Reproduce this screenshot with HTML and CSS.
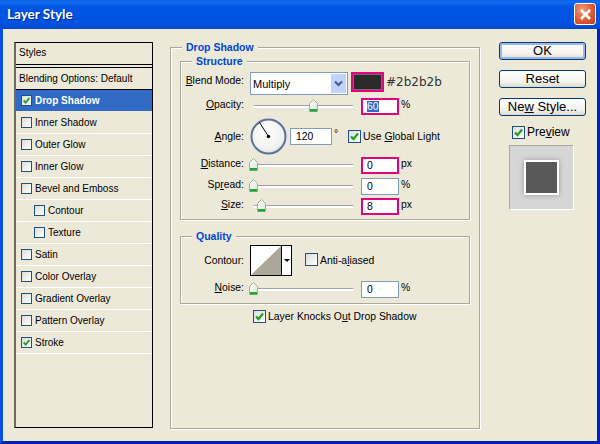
FILE: index.html
```html
<!DOCTYPE html>
<html lang="en">

<head>
  <meta charset="UTF-8">
  <meta name="viewport" content="width=device-width, initial-scale=1.0">
  <title>Layer Style</title>
  <link rel="stylesheet" href="styles.css">
</head>

<body>
  <svg class="defs" width="0" height="0">
    <defs>
      <linearGradient id="thumbFill" x1="0" y1="0" x2="1" y2="1">
        <stop offset="0" stop-color="#ffffff" />
        <stop offset="1" stop-color="#dfe6d8" />
      </linearGradient>
      <symbol id="thumb" viewBox="0 0 9 13">
        <path d="M4.5 .5 8.5 4.5V12.5H.5V4.5Z" fill="url(#thumbFill)" stroke="#8fb79a" />
        <path d="M1 10h7v2.500H1Z" fill="#27a33c" />
      </symbol>
      <symbol id="tick" viewBox="0 0 11 11">
        <path d="M2 5.500 4.500 8 9 2.500" fill="none" stroke="#21a121" stroke-width="2.200" />
      </symbol>
    </defs>
  </svg>

  <div class="window">
    <div class="titlebar">
      <div class="title">Layer Style</div>
      <div class="close">
        <svg width="13" height="13" viewBox="0 0 13 13">
          <path d="M2 2 11 11M11 2 2 11" stroke="#fff" stroke-width="2.600" />
        </svg>
      </div>
    </div>

    <div class="client">
      <div class="styles-list">
        <div class="list-head">Styles</div>
        <div class="list-blend">Blending Options: Default</div>
        <div class="list-row selected"><span class="check"><svg><use href="#tick" /></svg></span>Drop Shadow</div>
        <div class="list-row"><span class="check"></span>Inner Shadow</div>
        <div class="list-row"><span class="check"></span>Outer Glow</div>
        <div class="list-row"><span class="check"></span>Inner Glow</div>
        <div class="list-row"><span class="check"></span>Bevel and Emboss</div>
        <div class="list-row sub"><span class="check"></span>Contour</div>
        <div class="list-row sub"><span class="check"></span>Texture</div>
        <div class="list-row"><span class="check"></span>Satin</div>
        <div class="list-row"><span class="check"></span>Color Overlay</div>
        <div class="list-row"><span class="check"></span>Gradient Overlay</div>
        <div class="list-row"><span class="check"></span>Pattern Overlay</div>
        <div class="list-row"><span class="check"><svg><use href="#tick" /></svg></span>Stroke</div>
      </div>

      <fieldset class="group outer">
        <legend>Drop Shadow</legend>

        <fieldset class="group structure">
          <legend>Structure</legend>

          <div class="row blend-row">
            <label class="lbl"><u>B</u>lend Mode:</label>
            <div class="select">
              <span class="select-val">Multiply</span>
              <span class="select-btn">
                <svg width="9" height="7" viewBox="0 0 9 7">
                  <path d="M1 1.500 4.500 5 8 1.500" fill="none" stroke="#3d5a8f" stroke-width="2" />
                </svg>
              </span>
            </div>
            <div class="swatch"></div>
            <div class="hex">#2b2b2b</div>
          </div>

          <div class="row opacity-row">
            <label class="lbl"><u>O</u>pacity:</label>
            <div class="slider"><svg class="thumb" style="left:56px"><use href="#thumb" /></svg></div>
            <div class="num pink"><span class="sel">60</span></div>
            <span class="unit">%</span>
          </div>

          <div class="row angle-row">
            <label class="lbl"><u>A</u>ngle:</label>
            <svg class="dial" width="37" height="37" viewBox="0 0 37 37">
              <defs>
                <radialGradient id="dialFill" cx=".45" cy=".4" r=".65">
                  <stop offset="0" stop-color="#ffffff" />
                  <stop offset=".75" stop-color="#f1f1ee" />
                  <stop offset="1" stop-color="#d4d6dc" />
                </radialGradient>
              </defs>
              <circle cx="18.500" cy="18.500" r="17" fill="url(#dialFill)" stroke="#5d7099" stroke-width="2" />
              <path d="M18.500 18.500 9.500 4.500" stroke="#000" stroke-width="1" />
              <circle cx="18.500" cy="18.500" r="1.700" fill="#000" />
            </svg>
            <div class="num angle-num">120</div>
            <span class="deg">°</span>
            <span class="check lg"><svg><use href="#tick" /></svg></span>
            <span class="check-text">Use <u>G</u>lobal Light</span>
          </div>

          <div class="row dist-row">
            <label class="lbl"><u>D</u>istance:</label>
            <div class="slider"><svg class="thumb" style="left:-4px"><use href="#thumb" /></svg></div>
            <div class="num pink">0</div>
            <span class="unit">px</span>
          </div>

          <div class="row spread-row">
            <label class="lbl">Sp<u>r</u>ead:</label>
            <div class="slider"><svg class="thumb" style="left:-4px"><use href="#thumb" /></svg></div>
            <div class="num">0</div>
            <span class="unit">%</span>
          </div>

          <div class="row size-row">
            <label class="lbl"><u>S</u>ize:</label>
            <div class="slider"><svg class="thumb" style="left:4px"><use href="#thumb" /></svg></div>
            <div class="num pink">8</div>
            <span class="unit">px</span>
          </div>
        </fieldset>

        <fieldset class="group quality">
          <legend>Quality</legend>

          <div class="row contour-row">
            <label class="lbl">Contour:</label>
            <div class="contour">
              <svg width="30" height="29" viewBox="0 0 30 29">
                <path d="M0 0H30V29H0Z" fill="#fff" />
                <path d="M30 0V29H0Z" fill="#aca899" />
              </svg>
              <span class="contour-btn"></span>
            </div>
            <span class="check lg"></span>
            <span class="check-text">Anti-a<u>l</u>iased</span>
          </div>

          <div class="row noise-row">
            <label class="lbl"><u>N</u>oise:</label>
            <div class="slider"><svg class="thumb" style="left:-4px"><use href="#thumb" /></svg></div>
            <div class="num">0</div>
            <span class="unit">%</span>
          </div>
        </fieldset>

        <div class="knock-row">
          <span class="check lg"><svg><use href="#tick" /></svg></span>
          <span class="check-text">Layer Knocks O<u>u</u>t Drop Shadow</span>
        </div>
      </fieldset>

      <div class="side">
        <div class="btn default">OK</div>
        <div class="btn">Reset</div>
        <div class="btn">Ne<u>w</u> Style...</div>
        <div class="preview-row">
          <span class="check lg"><svg><use href="#tick" /></svg></span>
          <span class="check-text">Pre<u>v</u>iew</span>
        </div>
        <div class="preview">
          <div class="preview-square"></div>
        </div>
      </div>
    </div>
  </div>
</body>

</html>
```

FILE: styles.css
```css
* {
  box-sizing: border-box;
}

body {
  margin: 0;
  font-family: "Liberation Sans", sans-serif;
  font-size: 10.400px;
  color: #000;
}

.defs {
  display: block;
  height: 0;
}

.window {
  display: flex;
  flex-direction: column;
  width: 600px;
  height: 444px;
  overflow: hidden;
}

/* title bar */
.titlebar {
  display: flex;
  align-items: center;
  justify-content: space-between;
  height: 29px;
  padding: 0 4px 1px 7px;
  background: linear-gradient(#0a5fe6 0, #0f6cf0 8%, #0055e5 25%, #0053e1 80%, #0048c8 100%);
}

.title {
  font-family: Lato, sans-serif;
  font-weight: bold;
  font-size: 13.500px;
  color: #fff;
  text-shadow: 1px 1px 1px #0a2a8c;
}

.close {
  display: flex;
  align-items: center;
  justify-content: center;
  width: 22px;
  height: 22px;
  border: 1px solid #fff;
  border-radius: 3px;
  background: radial-gradient(circle at 35% 30%, #ee9c7f, #dd5a33 55%, #c23a18);
}

/* client area */
.client {
  flex: 1;
  display: flex;
  align-items: flex-start;
  padding: 12px 0 0 11px;
  background: #ece9d8;
  border-left: 3px solid #0a4fe0;
  border-right: 3px solid #0021c4;
  border-bottom: 3px solid #0021b8;
}

/* left list */
.styles-list {
  flex: none;
  width: 139px;
  height: 386px;
  margin-top: 1px;
  font-size: 10px;
  border: 1px solid #000;
  border-left: 2px solid #6d6b60;
}

.list-head {
  height: 22px;
  padding-left: 3px;
  line-height: 20px;
  border-bottom: 1px solid #000;
}

.list-blend {
  height: 23px;
  margin-top: 2px;
  padding-left: 3px;
  line-height: 21px;
  border-top: 1px solid #000;
  border-bottom: 1px solid #000;
}

.list-row {
  display: flex;
  align-items: center;
  gap: 3px;
  height: 22px;
  padding: 0 0 1px 5px;
  border-bottom: 1px solid #fff;
}

.list-row.sub {
  padding-left: 18px;
}

.list-row.selected {
  background: #316ac5;
  color: #fff;
  font-weight: bold;
  border-bottom-color: #ece9d8;
}

/* checkbox */
.check {
  flex: none;
  display: block;
  width: 11px;
  height: 11px;
  border: 1px solid #1c5180;
  background: linear-gradient(135deg, #dcdcd7, #fff);
}

.check svg {
  display: block;
  width: 100%;
  height: 100%;
}

.check.lg {
  width: 13px;
  height: 13px;
  border-width: 1.500px;
}

.check-text {
  margin-left: 2px;
}

/* group boxes */
.group {
  margin: 0;
  padding: 0;
  border: 1px solid #aca899;
  box-shadow: inset 1px 1px 0 #fff, 1px 1px 0 #fff;
}

.group legend {
  padding: 0 4px;
  margin-left: 11px;
  height: 13px;
  line-height: 13px;
  font-weight: bold;
  font-size: 10.500px;
  color: #0046d5;
  background: #ece9d8;
}

.outer {
  flex: none;
  width: 310px;
  height: 388px;
  margin-left: 17px;
  padding: 1px 9px 0;
}

.outer > legend {
  margin-left: 2px;
}

.structure {
  height: 165px;
}

.quality {
  height: 74px;
  margin-top: 10px;
}

/* control rows */
.row {
  display: flex;
  align-items: center;
}

.lbl {
  flex: none;
  width: 63px;
  margin-right: 6px;
  margin-bottom: 3px;
  text-align: right;
}

.blend-row {
  height: 24px;
  margin-top: 3px;
}

.blend-row .lbl {
  margin-bottom: 6px;
}

.opacity-row {
  height: 18px;
  margin-top: 2px;
}

.angle-row {
  height: 37px;
  margin-top: 3px;
}

.angle-row .lbl {
  margin-bottom: 0;
}

.dist-row {
  height: 18px;
  margin-top: 1px;
}

.spread-row {
  height: 18px;
  margin-top: 3px;
}

.size-row {
  height: 18px;
  margin-top: 2px;
}

.select {
  flex: none;
  display: flex;
  width: 98px;
  height: 23px;
  border: 1px solid #7f9db9;
  background: #fff;
}

.select-val {
  flex: 1;
  padding-left: 2px;
  font-size: 11px;
  line-height: 22px;
}

.select-btn {
  display: flex;
  align-items: center;
  justify-content: center;
  width: 15px;
  margin: 1px;
  background: #c1d3fb;
}

.swatch {
  flex: none;
  width: 33px;
  height: 20px;
  margin: 0 0 2px 3px;
  border: 1px solid #e6007e;
  background: #2b2b2b;
  box-shadow: inset 0 0 0 1px #e6007e, inset 0 0 0 2px #6f6f6f;
}

.hex {
  margin: 0 0 2px 2px;
  font-family: "DejaVu Sans", sans-serif;
  font-size: 12px;
  color: #333;
}

.slider {
  flex: none;
  position: relative;
  width: 101px;
  height: 3px;
  margin: 0 7px 0 3px;
  background: #fff;
  border-top: 1px solid #a3a3a3;
  border-radius: 2px;
}

.thumb {
  position: absolute;
  top: -7px;
  width: 9px;
  height: 13px;
}

.num {
  flex: none;
  width: 38px;
  height: 17px;
  padding-left: 5px;
  line-height: 16px;
  background: #fff;
  border: 1px solid #7f9db9;
}

.pink {
  border: 2px solid #e6007e;
  padding-left: 4px;
  line-height: 14px;
}

.sel {
  background: #316ac5;
  color: #fff;
}

.unit {
  margin-left: 2px;
  margin-bottom: 3px;
}

.dial {
  flex: none;
  display: block;
}

.angle-num {
  width: 42px;
  margin-left: 3px;
}

.deg {
  width: 14px;
  margin-left: 2px;
  margin-bottom: 6px;
}

.contour-row {
  height: 31px;
  margin-top: 2px;
}

.contour-row .lbl {
  margin-bottom: 0;
}

.contour {
  flex: none;
  display: flex;
  width: 42px;
  height: 31px;
  border: 1px solid #000;
  background: #fff;
}

.contour-btn {
  flex: 1;
  display: flex;
  align-items: center;
  justify-content: center;
  border-left: 1px solid #000;
}

.contour-btn::before {
  content: "";
  border: 3px solid transparent;
  border-top: 3px solid #000;
  border-bottom: 0;
}

.contour + .check {
  margin-left: 13px;
  margin-bottom: 2px;
}

.noise-row {
  height: 18px;
  margin-top: 4px;
}

.knock-row {
  display: flex;
  align-items: center;
  margin: 6px 0 0 73px;
}

/* right column */
.side {
  flex: none;
  width: 87px;
  margin: 1px 0 0 19px;
}

.btn {
  height: 18px;
  margin-bottom: 10px;
  font-size: 13px;
  line-height: 16px;
  text-align: center;
  border: 1px solid #003c74;
  border-radius: 3px;
  background: linear-gradient(#fff, #f3f2ea 70%, #dcd8ca);
}

.btn.default {
  box-shadow: inset 0 0 0 2px #9db8e8;
}

.preview-row {
  display: flex;
  align-items: center;
  margin: -1px 0 0 13px;
  font-size: 12px;
}

.preview {
  display: flex;
  align-items: center;
  justify-content: center;
  width: 65px;
  height: 65px;
  margin: 6px 0 0 10px;
  background: #d6d6d6;
  border: 1px solid;
  border-color: #aca899 #fff #fff #aca899;
}

.preview-square {
  width: 35px;
  height: 35px;
  background: #595959;
  border: 2px solid #fff;
  box-shadow: 0 0 5px #9a9a9a;
}
```
